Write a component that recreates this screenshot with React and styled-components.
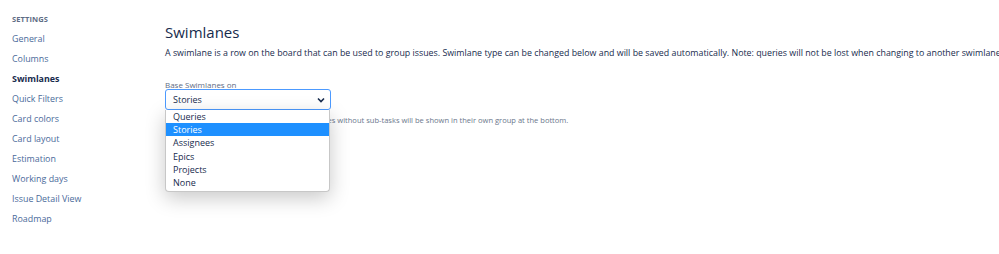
import styled, { createGlobalStyle } from "styled-components";

const GlobalStyle = createGlobalStyle`
  html, body {
    margin: 0;
    padding: 0;
    background: #fff;
    overflow: hidden;
  }
  body {
    font-family: "Open Sans", "Noto Sans", sans-serif;
    color: #172b4d;
  }
`;

const Page = styled.div`
  display: flex;
  width: 999px;
  height: 254px;
  overflow: hidden;
`;

const Sidebar = styled.nav`
  width: 165px;
  flex-shrink: 0;
  padding: 9px 0 0 12px;
  box-sizing: border-box;
`;

const SidebarTitle = styled.div`
  font-size: 7.5px;
  font-weight: 700;
  color: #5e6c84;
  letter-spacing: 0.1px;
  height: 20px;
  line-height: 20px;
`;

const NavItem = styled.div`
  font-size: 8.9px;
  height: 20px;
  line-height: 20px;
  white-space: nowrap;
  color: ${(p) => (p.$active ? "#172b4d" : "#4a6a9a")};
  font-weight: ${(p) => (p.$active ? 700 : 400)};
`;

const Main = styled.main`
  flex: 1;
  padding-top: 21px;
  white-space: nowrap;
`;

const Heading = styled.h1`
  margin: 0;
  font-size: 15px;
  font-weight: 400;
  line-height: 22px;
  color: #172b4d;
`;

const Description = styled.p`
  margin: 3px 0 0;
  font-size: 8.85px;
  line-height: 14px;
  color: #172b4d;
`;

const Field = styled.div`
  margin-top: 21px;
  position: relative;
  width: 166px;
`;

const Label = styled.label`
  display: block;
  font-size: 8px;
  line-height: 8px;
  color: #5e6c84;
  margin-bottom: 0;
`;

const SelectBox = styled.div`
  height: 21px;
  box-sizing: border-box;
  border: 1.5px solid #4c9aff;
  border-radius: 3px;
  display: flex;
  align-items: center;
  justify-content: space-between;
  padding: 0 5px 0 7px;
  font-size: 9px;
  color: #172b4d;
`;

const HelpText = styled.div`
  margin-top: 4px;
  font-size: 7.55px;
  line-height: 12px;
  color: #6b778c;
`;

const Menu = styled.ul`
  position: absolute;
  top: 29px;
  left: 0;
  width: 165px;
  margin: 0;
  padding: 0 0 2px;
  list-style: none;
  background: #fff;
  border: 1px solid #c7c7c7;
  border-top: none;
  border-radius: 0 0 4px 4px;
  box-sizing: border-box;
  box-shadow: 0 6px 20px rgba(0, 0, 0, 0.22);
`;

const Option = styled.li`
  height: 13.2px;
  line-height: 13.2px;
  padding-left: 7px;
  font-size: 9px;
  background: ${(p) => (p.$selected ? "#1e90ff" : "transparent")};
  color: ${(p) => (p.$selected ? "#fff" : "#172b4d")};
`;

const Chevron = () => (
  <svg width="8" height="6" viewBox="0 0 8 6">
    <path d="M1 1.5 L4 4.5 L7 1.5" fill="none" stroke="#172b4d" strokeWidth="1.6" />
  </svg>
);

const navItems = [
  "General",
  "Columns",
  "Swimlanes",
  "Quick Filters",
  "Card colors",
  "Card layout",
  "Estimation",
  "Working days",
  "Issue Detail View",
  "Roadmap",
];

const options = ["Queries", "Stories", "Assignees", "Epics", "Projects", "None"];

export default function App() {
  return (
    <>
      <GlobalStyle />
      <Page>
        <Sidebar>
          <SidebarTitle>SETTINGS</SidebarTitle>
          {navItems.map((item) => (
            <NavItem key={item} $active={item === "Swimlanes"}>
              {item}
            </NavItem>
          ))}
        </Sidebar>
        <Main>
          <Heading>Swimlanes</Heading>
          <Description>
            A swimlane is a row on the board that can be used to group issues. Swimlane type can be
            changed below and will be saved automatically. Note: queries will not be lost when
            changing to another swimlane type.
          </Description>
          <Field>
            <Label>Base Swimlanes on</Label>
            <SelectBox>
              <span>Stories</span>
              <Chevron />
            </SelectBox>
            <HelpText>
              Group sub-tasks under their parent issue. Issues without sub-tasks will be shown in
              their own group at the bottom.
            </HelpText>
            <Menu>
              {options.map((o) => (
                <Option key={o} $selected={o === "Stories"}>
                  {o}
                </Option>
              ))}
            </Menu>
          </Field>
        </Main>
      </Page>
    </>
  );
}
